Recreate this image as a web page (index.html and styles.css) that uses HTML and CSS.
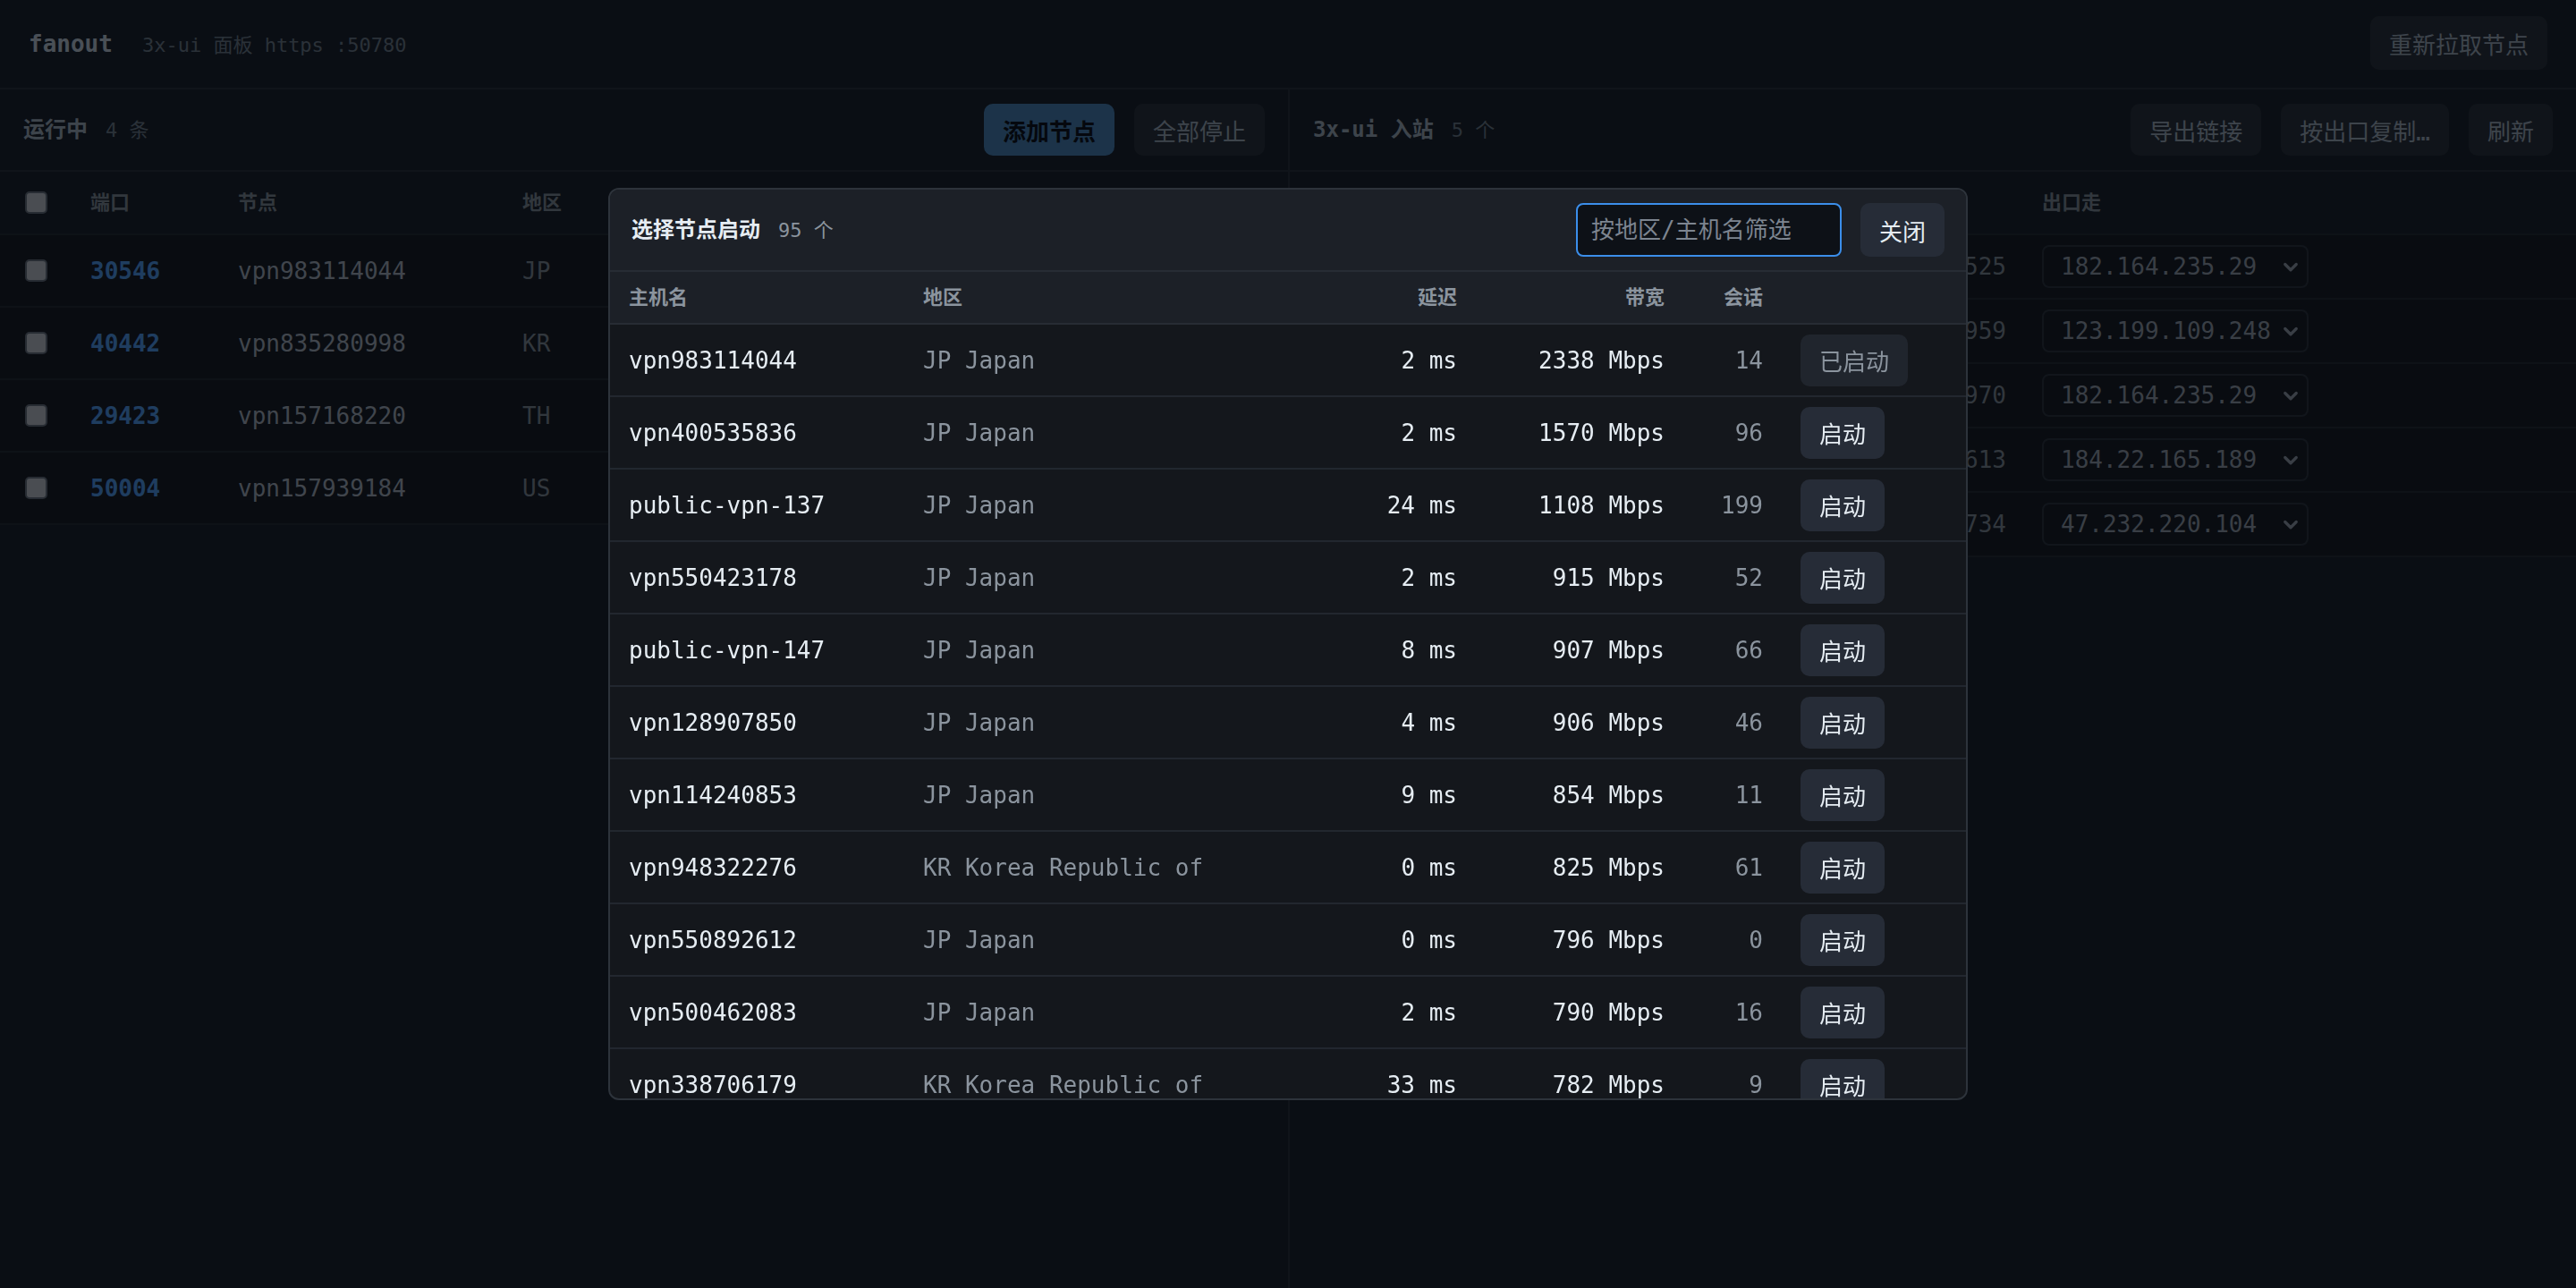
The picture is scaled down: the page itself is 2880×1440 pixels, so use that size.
FILE: index.html
```html
<!DOCTYPE html>
<html lang="zh-CN">

<head>
     <meta charset="UTF-8">
     <meta name="viewport" content="width=device-width, initial-scale=1.0">
     <title>fanout</title>
     <link rel="stylesheet" href="styles.css">
</head>

<body>
     <div class="topbar">
          <div class="brand">
               <span class="logo">fanout</span>
               <span class="panelInfo">3x-ui 面板 https :50780</span>
          </div>
          <button class="btn">重新拉取节点</button>
     </div>

     <div class="panes">
          <!-- running nodes -->
          <section class="pane">
               <div class="toolbar">
                    <div class="title">运行中<span class="count">4 条</span></div>
                    <div class="actions">
                         <button class="btn primary">添加节点</button>
                         <button class="btn">全部停止</button>
                    </div>
               </div>
               <div class="runTable">
                    <div class="runRow head">
                         <span><i class="check"></i></span>
                         <span>端口</span>
                         <span>节点</span>
                         <span>地区</span>
                    </div>
                    <div class="runRow">
                         <span><i class="check"></i></span>
                         <span class="port">30546</span>
                         <span class="host">vpn983114044</span>
                         <span class="muted">JP</span>
                    </div>
                    <div class="runRow">
                         <span><i class="check"></i></span>
                         <span class="port">40442</span>
                         <span class="host">vpn835280998</span>
                         <span class="muted">KR</span>
                    </div>
                    <div class="runRow">
                         <span><i class="check"></i></span>
                         <span class="port">29423</span>
                         <span class="host">vpn157168220</span>
                         <span class="muted">TH</span>
                    </div>
                    <div class="runRow">
                         <span><i class="check"></i></span>
                         <span class="port">50004</span>
                         <span class="host">vpn157939184</span>
                         <span class="muted">US</span>
                    </div>
               </div>
          </section>

          <!-- 3x-ui inbounds -->
          <section class="pane right">
               <div class="toolbar">
                    <div class="title">3x-ui 入站<span class="count">5 个</span></div>
                    <div class="actions">
                         <button class="btn">导出链接</button>
                         <button class="btn">按出口复制…</button>
                         <button class="btn">刷新</button>
                    </div>
               </div>
               <div class="inTable">
                    <div class="inRow head">
                         <span></span>
                         <span>出口走</span>
                    </div>
                    <div class="inRow">
                         <span class="num">45525</span>
                         <span><div class="pick">182.164.235.29<svg viewBox="0 0 16 16"><path d="M3 6l5 5 5-5"/></svg></div></span>
                    </div>
                    <div class="inRow">
                         <span class="num">37959</span>
                         <span><div class="pick">123.199.109.248<svg viewBox="0 0 16 16"><path d="M3 6l5 5 5-5"/></svg></div></span>
                    </div>
                    <div class="inRow">
                         <span class="num">21970</span>
                         <span><div class="pick">182.164.235.29<svg viewBox="0 0 16 16"><path d="M3 6l5 5 5-5"/></svg></div></span>
                    </div>
                    <div class="inRow">
                         <span class="num">39613</span>
                         <span><div class="pick">184.22.165.189<svg viewBox="0 0 16 16"><path d="M3 6l5 5 5-5"/></svg></div></span>
                    </div>
                    <div class="inRow">
                         <span class="num">40734</span>
                         <span><div class="pick">47.232.220.104<svg viewBox="0 0 16 16"><path d="M3 6l5 5 5-5"/></svg></div></span>
                    </div>
               </div>
          </section>
     </div>

     <!-- node picker dialog -->
     <div class="backdrop">
          <div class="modal">
               <div class="modalHead">
                    <div class="title light">选择节点启动<span class="count">95 个</span></div>
                    <div class="modalTools">
                         <input class="filter" type="text" placeholder="按地区/主机名筛选">
                         <button class="closeBtn">关闭</button>
                    </div>
               </div>
               <div class="nodeRow head">
                    <span>主机名</span>
                    <span>地区</span>
                    <span class="r">延迟</span>
                    <span class="r">带宽</span>
                    <span class="r">会话</span>
                    <span></span>
               </div>
               <div class="nodeList">
                    <div class="nodeRow">
                         <span>vpn983114044</span><span class="muted">JP Japan</span><span class="r">2 ms</span><span class="r">2338 Mbps</span><span class="r muted">14</span>
                         <span><button class="startBtn" disabled>已启动</button></span>
                    </div>
                    <div class="nodeRow">
                         <span>vpn400535836</span><span class="muted">JP Japan</span><span class="r">2 ms</span><span class="r">1570 Mbps</span><span class="r muted">96</span>
                         <span><button class="startBtn">启动</button></span>
                    </div>
                    <div class="nodeRow">
                         <span>public-vpn-137</span><span class="muted">JP Japan</span><span class="r">24 ms</span><span class="r">1108 Mbps</span><span class="r muted">199</span>
                         <span><button class="startBtn">启动</button></span>
                    </div>
                    <div class="nodeRow">
                         <span>vpn550423178</span><span class="muted">JP Japan</span><span class="r">2 ms</span><span class="r">915 Mbps</span><span class="r muted">52</span>
                         <span><button class="startBtn">启动</button></span>
                    </div>
                    <div class="nodeRow">
                         <span>public-vpn-147</span><span class="muted">JP Japan</span><span class="r">8 ms</span><span class="r">907 Mbps</span><span class="r muted">66</span>
                         <span><button class="startBtn">启动</button></span>
                    </div>
                    <div class="nodeRow">
                         <span>vpn128907850</span><span class="muted">JP Japan</span><span class="r">4 ms</span><span class="r">906 Mbps</span><span class="r muted">46</span>
                         <span><button class="startBtn">启动</button></span>
                    </div>
                    <div class="nodeRow">
                         <span>vpn114240853</span><span class="muted">JP Japan</span><span class="r">9 ms</span><span class="r">854 Mbps</span><span class="r muted">11</span>
                         <span><button class="startBtn">启动</button></span>
                    </div>
                    <div class="nodeRow">
                         <span>vpn948322276</span><span class="muted">KR Korea Republic of</span><span class="r">0 ms</span><span class="r">825 Mbps</span><span class="r muted">61</span>
                         <span><button class="startBtn">启动</button></span>
                    </div>
                    <div class="nodeRow">
                         <span>vpn550892612</span><span class="muted">JP Japan</span><span class="r">0 ms</span><span class="r">796 Mbps</span><span class="r muted">0</span>
                         <span><button class="startBtn">启动</button></span>
                    </div>
                    <div class="nodeRow">
                         <span>vpn500462083</span><span class="muted">JP Japan</span><span class="r">2 ms</span><span class="r">790 Mbps</span><span class="r muted">16</span>
                         <span><button class="startBtn">启动</button></span>
                    </div>
                    <div class="nodeRow">
                         <span>vpn338706179</span><span class="muted">KR Korea Republic of</span><span class="r">33 ms</span><span class="r">782 Mbps</span><span class="r muted">9</span>
                         <span><button class="startBtn">启动</button></span>
                    </div>
               </div>
          </div>
     </div>
</body>

</html>
```

FILE: styles.css
```css
* {
     margin: 0px;
     padding: 0px;
     box-sizing: border-box;
     font-family: "DejaVu Sans Mono", "Noto Sans CJK SC", monospace;
}

body {
     width: 100%;
     height: 100vh;
     overflow: hidden;
     background-color: #1c2128;
     color: #adbac7;
}

button {
     font-family: "DejaVu Sans Mono", "Noto Sans CJK SC", monospace;
     cursor: pointer;
}

.btn {
     height: 58px;
     padding: 0px 21px;
     border: none;
     border-radius: 10px;
     background-color: #2d333b;
     color: #adbac7;
     font-size: 26px;
     white-space: nowrap;
}

.btn.primary {
     background-color: #4d8ac0;
     color: #0d1117;
     font-weight: 600;
}

.topbar {
     display: flex;
     justify-content: space-between;
     align-items: center;
     height: 100px;
     padding: 0px 32px 2px;
     border-bottom: 2px solid #2d333b;
     .btn {
          height: 60px;
     }
}

.brand {
     display: flex;
     align-items: baseline;
     gap: 33px;
     .logo {
          font-size: 26px;
          font-weight: 700;
          color: #cdd9e5;
     }
     .panelInfo {
          font-size: 22px;
          color: #768390;
     }
}

.panes {
     display: grid;
     grid-template-columns: 1440px 1fr;
     height: calc(100vh - 100px);
}

.pane.right {
     border-left: 2px solid #2d333b;
}

.toolbar {
     display: flex;
     justify-content: space-between;
     align-items: center;
     height: 92px;
     padding: 0px 26px;
     border-bottom: 2px solid #2d333b;
}

.title {
     display: flex;
     align-items: center;
     padding-bottom: 5px;
     font-size: 24px;
     font-weight: 700;
     color: #adbac7;
     .count {
          margin-left: 20px;
          font-size: 22px;
          font-weight: 400;
          color: #768390;
     }
}

.title.light {
     color: #e6edf3;
     .count {
          color: #8b949e;
     }
}

.actions {
     display: flex;
     gap: 22px;
}

/* left: running table */
.runRow {
     display: grid;
     grid-template-columns: 79px 165px 318px 1fr;
     align-items: center;
     height: 81px;
     border-bottom: 2px solid #262c33;
     background-color: #171b21;
     font-size: 26px;
     span {
          padding-left: 22px;
          white-space: nowrap;
     }
     span:first-child {
          padding-left: 28px;
          display: flex;
     }
}

.runRow.head,
.inRow.head {
     height: 71px;
     padding-bottom: 5px;
     background-color: #1c2128;
     font-size: 22px;
     font-weight: 700;
     color: #8b949e;
}

.runRow.head span:first-child {
     padding-top: 5px;
}

.check {
     display: block;
     width: 25px;
     height: 25px;
     border-radius: 5px;
     border: 2px solid #6e7681;
     background-color: #d0d4d9;
}

.port {
     font-weight: 700;
     color: #58a6ff;
}

.host {
     color: #b4bec9;
}

.muted {
     color: #8b949e;
}

/* right: inbound table */
.inRow {
     display: grid;
     grid-template-columns: 819px 1fr;
     align-items: center;
     height: 72px;
     border-bottom: 2px solid #262c33;
     background-color: #171b21;
     font-size: 26px;
     span {
          padding-left: 22px;
          white-space: nowrap;
     }
     .num {
          text-align: right;
          padding-right: 18px;
          color: #8b949e;
     }
}

.pick {
     display: flex;
     justify-content: space-between;
     align-items: center;
     width: 298px;
     height: 48px;
     padding: 0px 8px 0px 19px;
     border: 2px solid #30363d;
     border-radius: 8px;
     color: #a0a9b4;
     font-size: 26px;
     svg {
          width: 20px;
          height: 20px;
          fill: none;
          stroke: #a0a9b4;
          stroke-width: 2.6;
          stroke-linecap: round;
          stroke-linejoin: round;
     }
}

/* dialog */
.backdrop {
     position: fixed;
     left: 0px;
     top: 0px;
     width: 100%;
     height: 100%;
     display: flex;
     justify-content: center;
     align-items: center;
     background-color: rgba(1, 4, 9, 0.65);
     z-index: 100;
}

.modal {
     width: 1520px;
     height: 1020px;
     display: flex;
     flex-direction: column;
     overflow: hidden;
     background-color: #14171c;
     border: 2px solid #2d333b;
     border-radius: 12px;
     color: #e6edf3;
}

.modalHead {
     display: flex;
     justify-content: space-between;
     align-items: center;
     padding: 15px 24px;
     background-color: #1c2027;
     border-bottom: 2px solid #272c34;
}

.modalTools {
     display: flex;
     gap: 21px;
}

.filter {
     width: 297px;
     height: 60px;
     padding: 0px 15px;
     border: 2px solid #3b8eea;
     border-radius: 8px;
     background-color: #0d1117;
     color: #e6edf3;
     font-size: 26px;
     outline: none;
     font-family: "DejaVu Sans Mono", "Noto Sans CJK SC", monospace;
}

.filter::placeholder {
     color: #7d8590;
}

.closeBtn {
     height: 60px;
     padding: 0px 21px;
     border: none;
     border-radius: 10px;
     background-color: #262c37;
     color: #e6edf3;
     font-size: 26px;
}

.nodeRow {
     display: grid;
     grid-template-columns: 329px 439px 200px 232px 110px 1fr;
     align-items: center;
     flex-shrink: 0;
     height: 81px;
     border-bottom: 2px solid #22272f;
     font-size: 26px;
     span {
          padding: 0px 21px;
          white-space: nowrap;
     }
     .r {
          text-align: right;
     }
}

.nodeRow.head {
     height: 59px;
     padding-bottom: 5px;
     background-color: #1c2027;
     border-bottom: 2px solid #272c34;
     font-size: 22px;
     font-weight: 700;
     color: #8b949e;
}

.nodeList {
     flex: 1;
     overflow-y: auto;
     scrollbar-width: none;
}

.startBtn {
     height: 58px;
     padding: 0px 21px;
     border: none;
     border-radius: 10px;
     background-color: #262c37;
     color: #e6edf3;
     font-size: 26px;
}

.startBtn:disabled {
     background-color: #20252d;
     color: #8b949e;
     cursor: default;
}
```
